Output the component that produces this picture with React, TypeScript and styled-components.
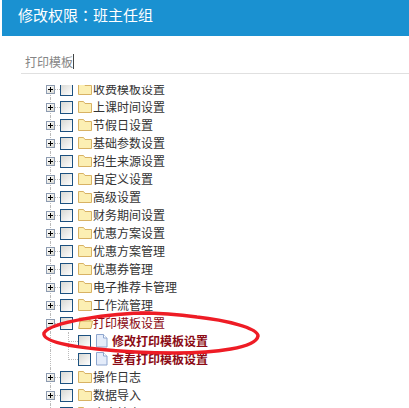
import React from "react";
import styled, { createGlobalStyle } from "styled-components";

const Global = createGlobalStyle`
  html, body { margin: 0; padding: 0; background: #fff; }
  body { font-family: "Liberation Sans", "Noto Sans CJK SC", sans-serif; }
`;

const Page = styled.div`
  position: relative;
  width: 409px;
  height: 408px;
  overflow: hidden;
  background: #fff;
  padding-left: 2px;
  box-sizing: border-box;
`;

const Header = styled.div`
  height: 36px;
  background: #1a91d1;
  color: #fff;
  font-size: 15px;
  line-height: 30px;
  padding-left: 16px;
  font-family: "Noto Sans CJK SC", sans-serif;
`;

const Colon = styled.span`
  font-family: "Noto Sans CJK TC", sans-serif;
`;

const SearchBar = styled.div`
  margin-left: 19px;
  height: 38px;
  border-bottom: 1px solid #e0e0e0;
  display: flex;
  align-items: center;
  padding: 14px 0 0 4px;
  box-sizing: border-box;
  font-size: 12px;
  color: #858585;
  font-family: "Noto Sans CJK SC", sans-serif;
`;

const Caret = styled.span`
  display: inline-block;
  width: 1px;
  height: 15px;
  background: #444;
`;

const Tree = styled.div`
  height: 323px;
  margin-top: 11px;
  overflow: hidden;
  padding-left: 44px;
`;

const TreeInner = styled.div`
  margin-top: -5px;
`;

const Row = styled.div<{ $child?: boolean }>`
  position: relative;
  height: 18px;
  display: flex;
  align-items: center;
  padding-left: ${(p) => (p.$child ? "22px" : "0")};
  &::before {
    content: "";
    position: absolute;
    left: 4px;
    top: 0;
    bottom: 0;
    border-left: 1px dotted #bbb;
  }
`;

const Toggle = styled.span`
  width: 9px;
  height: 9px;
  box-sizing: border-box;
  border: 1px solid #8d9bb0;
  background: linear-gradient(135deg, #fff, #d8d8d0);
  position: relative;
  flex: none;
  &::before {
    content: "";
    position: absolute;
    left: 1px;
    right: 1px;
    top: 3px;
    height: 1px;
    background: #000;
  }
`;

const PlusBar = styled.span`
  position: absolute;
  top: 1px;
  bottom: 1px;
  left: 3px;
  width: 1px;
  background: #000;
`;

const Dash = styled.span`
  width: 5px;
  border-top: 1px dotted #bbb;
  flex: none;
`;

const Connector = styled.span<{ $tall?: boolean }>`
  position: relative;
  width: 10px;
  height: ${(p) => (p.$tall ? "28px" : "10px")};
  margin-top: ${(p) => (p.$tall ? "-18px" : "0")};
  align-self: flex-start;
  border-left: 1px dotted #bbb;
  border-bottom: 1px dotted #bbb;
  box-sizing: border-box;
  flex: none;
`;

const Check = styled.span`
  width: 13px;
  height: 13px;
  box-sizing: border-box;
  border: 1px solid #1c5180;
  background: linear-gradient(135deg, #d8d8d3, #fff);
  flex: none;
  margin-right: 5px;
`;

const IconBox = styled.svg`
  flex: none;
`;

const Label = styled.span<{ $red?: boolean; $bold?: boolean }>`
  font-size: 12px;
  line-height: 18px;
  color: ${(p) => (p.$red ? "#8b0a14" : "#333")};
  font-weight: ${(p) => (p.$bold ? 700 : 400)};
  white-space: nowrap;
  font-family: "Noto Sans CJK SC", sans-serif;
`;

const Annotation = styled.svg`
  position: absolute;
  left: 0;
  top: 0;
  pointer-events: none;
`;

const Folder = ({ open }: { open?: boolean }) => (
  <IconBox width="15" height="14" viewBox="0 0 15 14">
    {open ? (
      <path d="M1 4V2h5l1 1h5v2M.7 12.500 2 5h12.500L13 12.500z" fill="#fbe9a6" stroke="#d2ab58" />
    ) : (
      <path d="M.5 12.500V1.500h5l1.500 2h6.500v9z" fill="#fcefb3" stroke="#d8b264" />
    )}
  </IconBox>
);

const Doc = () => (
  <IconBox width="16" height="14" viewBox="0 0 16 14">
    <path d="M.5 .5h7l3.500 3.500V13H.5z" fill="#e4ecfa" stroke="#8ea6cf" />
    <path d="M7.500 .5V4H11" fill="#fff" stroke="#8ea6cf" />
  </IconBox>
);

const top: string[] = [
  "收费模板设置",
  "上课时间设置",
  "节假日设置",
  "基础参数设置",
  "招生来源设置",
  "自定义设置",
  "高级设置",
  "财务期间设置",
  "优惠方案设置",
  "优惠方案管理",
  "优惠券管理",
  "电子推荐卡管理",
  "工作流管理",
];

const bottom: string[] = ["操作日志", "数据导入", "个人档案"];

const Branch = ({ text }: { text: string }) => (
  <Row>
    <Toggle>
      <PlusBar />
    </Toggle>
    <Dash />
    <Check />
    <Folder />
    <Label>{text}</Label>
  </Row>
);

const Leaf = ({ text, tall }: { text: string; tall?: boolean }) => (
  <Row $child>
    <Connector $tall={tall} />
    <Check />
    <Doc />
    <Label $red $bold>
      {text}
    </Label>
  </Row>
);

export default function App() {
  return (
    <Page>
      <Global />
      <Header>
        修改权限<Colon>：</Colon>班主任组
      </Header>
      <SearchBar>
        打印模板
        <Caret />
      </SearchBar>
      <Tree>
        <TreeInner>
          {top.map((t) => (
            <Branch key={t} text={t} />
          ))}
          <Row>
            <Toggle />
            <Dash />
            <Check />
            <Folder open />
            <Label $red>打印模板设置</Label>
          </Row>
          <Leaf text="修改打印模板设置" />
          <Leaf text="查看打印模板设置" tall />
          {bottom.map((t) => (
            <Branch key={t} text={t} />
          ))}
        </TreeInner>
      </Tree>
      <Annotation width="409" height="408" viewBox="0 0 409 408">
        <path
          d="M150 313C110 313 50 322 44 333C42 342 75 347 97 349C125 352 150 353 175 353C215 353 256 348 258 336C258 328 225 320 197 317C175 314 160 313 140 313"
          fill="none"
          stroke="#ee1c25"
          strokeWidth="3.5"
          strokeLinecap="round"
        />
      </Annotation>
    </Page>
  );
}
